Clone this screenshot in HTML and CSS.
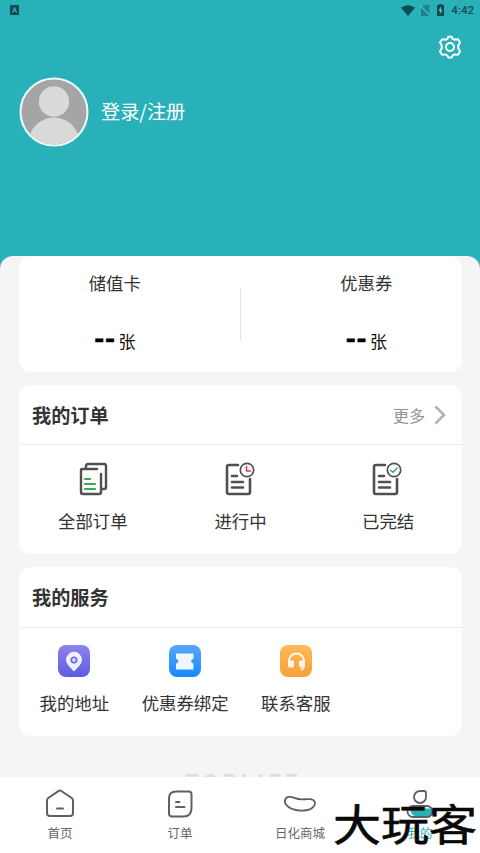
FILE: index.html
```html
<!DOCTYPE html>
<html lang="zh-CN">
<head>
<meta charset="utf-8">
<title>我的</title>
<link rel="stylesheet" href="styles.css">
</head>
<body>
<div class="app">
  <header class="hero">
    <div class="status">
      <svg class="status-app" width="9" height="10" viewBox="0 0 9 10"><rect width="9" height="10" rx="1" fill="#0d4d53"/><path d="M2.5 7.5 4.5 2.5 6.5 7.5M3.3 6H5.7" fill="none" stroke="#62b5ba" stroke-width="1"/></svg>
      <div class="status-right">
        <svg width="14" height="11" viewBox="0 0 14 11"><path d="M0 2.8C4-.6 10-.6 14 2.8L7 11Z" fill="#0d4d53"/></svg>
        <svg class="sim" width="10" height="11" viewBox="0 0 10 11"><path d="M3.5 0H9.5V11H1V3Z" fill="#1b858e"/><path d="M0 .5 10 10.5" stroke="#42b9c1" stroke-width="1.5"/></svg>
        <svg class="battery" width="7" height="12" viewBox="0 0 7 12"><path d="M2 0H5V1H7V12H0V1H2Z" fill="#0d4d53"/><path d="M4 2.5 1.5 6.8H3.3L3 10 5.5 5.7H3.7Z" fill="#7fd0d4"/></svg>
        <span class="time">4:42</span>
      </div>
    </div>
    <svg class="gear" width="24" height="24" viewBox="0 0 24 24" fill="none" stroke="#fff" stroke-width="2" stroke-linejoin="round"><path d="M9.6 3.6 10.2 1.7H13.8L14.4 3.6Q16 5.1 18 4.4L20 4.2 22 7.5 20.9 9.2Q19.3 12 20.9 14.4L22 16.4 20 19.7 17.8 19.5Q15.3 19.2 14.4 21L13.8 22.5H10.2L9.6 21Q8.4 19.2 6.2 19.5L4 19.7 2 16.4 3.1 14.4Q4.7 12 3.1 9.2L2 7.5 4 4.2 6 4.4Q8.3 5.1 9.6 3.6Z"/><circle cx="12" cy="12" r="4"/></svg>
    <div class="profile">
      <svg width="70" height="70" viewBox="0 0 70 70"><defs><clipPath id="face"><circle cx="35" cy="35" r="32.5"/></clipPath></defs><circle cx="35" cy="35" r="33.5" fill="#a5a5a5" stroke="#effcfc" stroke-width="2"/><g clip-path="url(#face)" fill="#d9d9d9"><circle cx="35" cy="24.5" r="15.2"/><circle cx="35" cy="66" r="25.5"/></g></svg>
      <span class="login">登录/注册</span>
    </div>
  </header>
  <main class="sheet">
    <section class="card assets">
      <div class="asset"><span class="asset-name">储值卡</span><span class="asset-value"><b class="dashes">--</b>张</span></div>
      <i class="divider"></i>
      <div class="asset"><span class="asset-name">优惠券</span><span class="asset-value"><b class="dashes">--</b>张</span></div>
    </section>
    <section class="card orders">
      <div class="card-head"><h2>我的订单</h2><span class="more">更多<svg width="12" height="20" viewBox="0 0 12 20"><path d="M1.5 1.5 10 10 1.5 18.5" fill="none" stroke="#b2b2b2" stroke-width="2.6"/></svg></span></div>
      <div class="items">
        <div class="item"><svg width="32" height="34" viewBox="-1 0 32 34" fill="none" stroke="#505050" stroke-width="2.4" stroke-linecap="round" stroke-linejoin="round"><path d="M8 5V4Q8 2 10 2H26Q28 2 28 4V25Q28 27 26 27H24M19 7H4Q3 7 3 8V30Q3 32 5 32H21Q23 32 23 30V12"/><path d="M7 17H12M7 22H17M7 27H17" stroke="#39a852" stroke-width="2.2"/></svg><span>全部订单</span></div>
        <div class="item"><svg width="32" height="34" viewBox="0 0 32 34" fill="none" stroke="#505050" stroke-width="2.6" stroke-linecap="round" stroke-linejoin="round"><path d="M14 3H5Q3 3 3 5V30Q3 32 5 32H24Q26 32 26 30V17M8 14H13M8 20H19M8 25.5H19" stroke-width="2.6"/><circle cx="23" cy="8" r="6.7" stroke-width="1.7"/><path d="M22.5 4.5V9H26.5" stroke="#dc3851" stroke-width="1.6"/></svg><span>进行中</span></div>
        <div class="item"><svg width="32" height="34" viewBox="1 0 32 34" fill="none" stroke="#505050" stroke-width="2.6" stroke-linecap="round" stroke-linejoin="round"><path d="M14 3H5Q3 3 3 5V30Q3 32 5 32H24Q26 32 26 30V17M8 14H13M8 20H19M8 25.5H19"/><circle cx="23" cy="8" r="6.7" stroke-width="1.7"/><path d="M19.7 8.2 22 10.2 26.2 6" stroke="#27a694" stroke-width="1.5"/></svg><span>已完结</span></div>
      </div>
    </section>
    <section class="card services">
      <div class="card-head"><h2>我的服务</h2></div>
      <div class="service-items">
        <div class="item"><svg width="32" height="32" viewBox="0 0 32 32"><defs><linearGradient id="purple" x1="0" y1="0" x2="0" y2="1"><stop stop-color="#8c84ee"/><stop offset="1" stop-color="#5e5be1"/></linearGradient></defs><rect width="32" height="32" rx="8" fill="url(#purple)"/><path d="M16 26.5C13 23 8 19.5 8 14.8A8 8 0 0 1 24 14.8C24 19.5 19 23 16 26.5Z" fill="#f0efff"/><circle cx="16" cy="15" r="2.7" fill="#dddbfa" stroke="#6a66dc" stroke-width="1.6"/></svg><span>我的地址</span></div>
        <div class="item"><svg width="32" height="32" viewBox="0 0 32 32"><defs><linearGradient id="blue" x1="0" y1="0" x2="0" y2="1"><stop stop-color="#5aa7f8"/><stop offset="1" stop-color="#1688fb"/></linearGradient></defs><rect width="32" height="32" rx="8" fill="url(#blue)"/><path d="M7 8.5H24.5V14A2.3 2.3 0 0 0 24.5 18.6V24.5H7V18.6A2.3 2.3 0 0 0 7 14Z" fill="#eef7ff"/></svg><span>优惠券绑定</span></div>
        <div class="item"><svg width="32" height="32" viewBox="0 0 32 32"><defs><linearGradient id="orange" x1="0" y1="0" x2="0" y2="1"><stop stop-color="#fdb95b"/><stop offset="1" stop-color="#f7a039"/></linearGradient></defs><rect width="32" height="32" rx="8" fill="url(#orange)"/><path d="M9 18V16A7.5 7.5 0 0 1 24 16V20Q24 24 21 24.5" fill="none" stroke="#fff6e8" stroke-width="2"/><rect x="8" y="15.5" width="6" height="7" rx="1.6" fill="#fff6e8"/><rect x="19" y="15.5" width="6" height="7" rx="1.6" fill="#fff6e8"/></svg><span>联系客服</span></div>
      </div>
    </section>
    <div class="brand">TOPLIFE</div>
  </main>
  <nav class="tabs">
    <div class="tab"><svg width="32" height="32" viewBox="0 0 32 32" fill="none" stroke="#606060" stroke-width="2" stroke-linejoin="round" stroke-linecap="round"><path d="M14.3 4.2Q16 3 17.7 4.2L27.7 11Q29 12 29 13.5V26Q29 29 26 29H6Q3 29 3 26V13.5Q3 12 4.3 11ZM13 21.5H19"/></svg><span>首页</span></div>
    <div class="tab"><svg width="32" height="32" viewBox="0 0 32 32" fill="none" stroke="#606060" stroke-width="2" stroke-linecap="round"><path d="M12 4.5H25Q27.5 4.5 27.5 7.5V21Q27.5 29.5 19.5 29.5H8Q5 29.5 5 26.5V11.5Q5 4.5 12 4.5ZM12 15H15.5M12 20H20.5"/></svg><span>订单</span></div>
    <div class="tab"><svg width="32" height="32" viewBox="0 0 32 32" fill="none" stroke="#606060" stroke-width="1.8"><path d="M1 13C2 9 7 9.5 11 11.2 17 13.5 20 11.7 26 12.2 31 12.6 32 16 30 19 27 23.5 19 24.5 12 23 4 21.5 0 17 1 13Z"/></svg><span>日化商城</span></div>
    <div class="tab active"><svg width="32" height="32" viewBox="0 0 32 32" fill="none" stroke="#606060" stroke-width="1.8"><path d="M16 4H20Q22 4 22 6V10A6 6 0 1 1 16 4Z"/><path d="M6 21.5H28V25Q28 29 24 29H11Q7 28 6 21.5Z" fill="#28afb8" stroke="none"/><rect x="3.5" y="19" width="25" height="11" rx="5.5"/></svg><span>我的</span></div>
    <div class="watermark">大玩客</div>
  </nav>
</div>
</body>
</html>
```

FILE: styles.css
```css
* { box-sizing: border-box; }
body { margin: 0; font-family: "Noto Sans CJK SC", sans-serif; color: #333; }
.app { width: 480px; height: 853px; display: flex; flex-direction: column; overflow: hidden; background: #29b1ba; }
.hero { height: 256px; flex: none; display: flex; flex-direction: column; }
.status { height: 20px; padding: 0 6px 0 10px; display: flex; justify-content: space-between; align-items: center; }
.status-right { display: flex; align-items: center; color: #0d4d53; }
.sim { margin-left: 5px; }
.battery { margin-left: 7px; }
.time { margin-left: 7px; font: 500 11.5px/20px Roboto, sans-serif; }
.gear { align-self: flex-end; margin: 15px 18px 0 0; }
.profile { display: flex; align-items: center; gap: 12px; padding-left: 19px; margin-top: 18px; }
.login { color: #fff; font-size: 19.2px; line-height: 28px; margin-top: -2px; }
.sheet { flex: 1; min-height: 0; overflow: hidden; padding: 0 18px 0 19px; border-radius: 13px 13px 0 0; background: #f5f5f5; }
.card { background: #fff; border-radius: 12px; margin-bottom: 13px; }
.assets { height: 116px; display: flex; align-items: center; }
.asset { flex: 1; display: flex; flex-direction: column; align-items: center; padding-bottom: 4px; }
.asset:first-child { padding-right: 29px; }
.asset:last-child { padding-left: 30px; }
.asset-name { font-size: 17.4px; line-height: 26px; }
.asset-value { margin-top: 32px; font-size: 17px; line-height: 26px; color: #111; display: flex; }
.dashes { font: 700 27px/24px Roboto, sans-serif; color: #000; margin-right: 3px; -webkit-text-stroke: .6px #000; }
.divider { width: 1px; height: 51px; background: #e4e4e4; }
.orders, .services { height: 169px; }
.card-head { height: 60px; border-bottom: 1px solid #eee; display: flex; align-items: center; justify-content: space-between; padding: 0 16px 0 13px; }
.services .card-head { height: 61px; }
h2 { margin: 0; font-size: 19.2px; line-height: 28px; font-weight: 700; }
.more { display: flex; align-items: center; gap: 9px; color: #919191; font-size: 16px; line-height: 24px; }
.items { display: grid; grid-template-columns: repeat(3, 1fr); padding-top: 17px; }
.item { display: flex; flex-direction: column; align-items: center; font-size: 17.4px; line-height: 26px; white-space: nowrap; }
.items .item svg { margin-bottom: 12px; }
.service-items { display: grid; grid-template-columns: repeat(4, 1fr); padding-top: 17px; }
.service-items .item svg { margin-bottom: 13px; }
.brand { height: 36px; margin-top: 29px; padding-left: 6px; text-align: center; color: #dedede; font: 700 22px/36px Roboto, sans-serif; letter-spacing: 4.5px; }
.tabs { position: relative; height: 76px; flex: none; display: grid; grid-template-columns: repeat(4, 1fr); padding-top: 10px; background: #fff; color: #666; }
.tab { display: flex; flex-direction: column; align-items: center; font-size: 12.5px; line-height: 18px; }
.tab span { margin-top: 5px; }
.active { color: #29b1ba; }
.watermark { position: absolute; left: 333px; top: 17px; color: #090909; font-size: 48px; line-height: 56px; font-weight: 400; white-space: nowrap; -webkit-text-stroke: .7px #090909; transform: scaleY(.9); }
```
